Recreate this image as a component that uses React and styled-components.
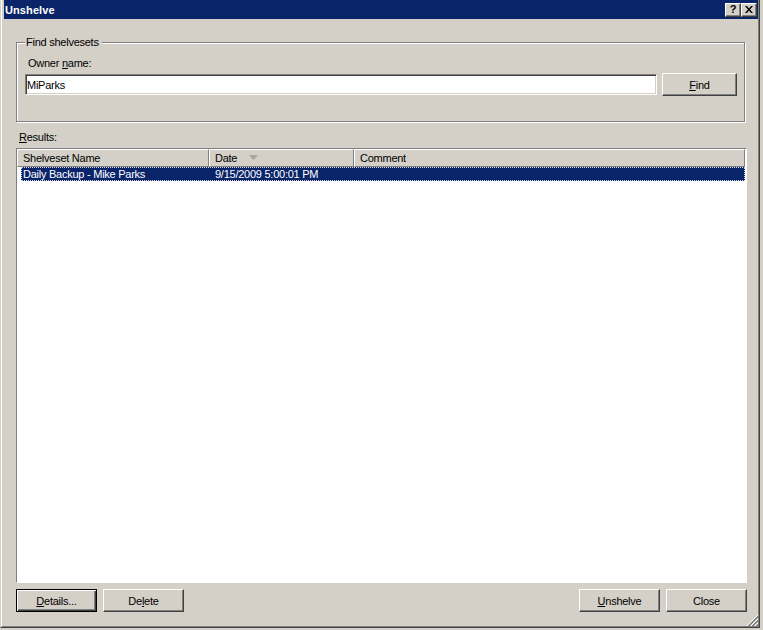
import React from "react";
import styled, { createGlobalStyle } from "styled-components";

const FACE = "#D4D0C8";
const SHADOW = "#808080";
const DARK = "#404040";
const HI = "#FFFFFF";
const NAVY = "#0A246A";

const Global = createGlobalStyle`
  html, body { margin: 0; padding: 0; background: ${FACE}; }
  body {
    font-family: "Liberation Sans", Arial, sans-serif;
    font-size: 11px;
    letter-spacing: -0.25px;
    color: #000;
  }
  * { box-sizing: border-box; }
  #root { width: 763px; height: 630px; overflow: hidden; }
`;

const Window = styled.div`
  width: 760px;
  height: 628px;
  border-left: 1px solid ${FACE};
  border-right: 1px solid ${DARK};
  border-bottom: 1px solid ${DARK};
`;

const Frame = styled.div`
  position: relative;
  height: 100%;
  display: flex;
  flex-direction: column;
  border-left: 1px solid ${HI};
  border-right: 1px solid ${SHADOW};
  border-bottom: 1px solid ${SHADOW};
  padding-left: 2px;
`;

const TitleBar = styled.div`
  height: 19px;
  flex: none;
  background: ${NAVY};
  display: flex;
  align-items: center;
  justify-content: space-between;
  padding: 0 1px 0 1px;
`;

const Title = styled.span`
  color: #fff;
  font-weight: bold;
  font-size: 11px;
  letter-spacing: 0.1px;
  line-height: 13px;
  padding-top: 1px;
`;

const CaptionGroup = styled.div`
  display: flex;
`;

const CaptionButton = styled.div`
  width: 16px;
  height: 14px;
  background: ${FACE};
  border: 1px solid;
  border-color: ${HI} ${DARK} ${DARK} ${HI};
  box-shadow: inset -1px -1px 0 ${SHADOW};
  display: flex;
  align-items: center;
  justify-content: center;
  font-weight: bold;
  font-size: 11px;
  line-height: 11px;
  padding-bottom: 1px;
  letter-spacing: 0;
`;

const Body = styled.div`
  flex: 1;
  display: flex;
  flex-direction: column;
  padding: 0 11px 14px 12px;
`;

const GroupBox = styled.div`
  position: relative;
  flex: none;
  height: 80px;
  margin: 23px 2px 0 0;
  border: 1px solid ${SHADOW};
  box-shadow: inset 1px 1px 0 ${HI}, 1px 1px 0 ${HI};
  padding: 14px 7px 0 8px;
`;

const Legend = styled.span`
  position: absolute;
  top: -7px;
  left: 8px;
  padding: 0 3px 0 1px;
  background: ${FACE};
  line-height: 13px;
`;

const FieldLabel = styled.div`
  line-height: 13px;
  margin: 0 0 3px 3px;
`;

const InputRow = styled.div`
  display: flex;
  align-items: center;
  gap: 5px;
`;

const TextInput = styled.input`
  flex: 1;
  height: 21px;
  margin: 0;
  padding: 0 1px;
  background: #fff;
  border: 1px solid;
  border-color: ${SHADOW} ${HI} ${HI} ${SHADOW};
  box-shadow: inset 1px 1px 0 ${DARK}, inset -1px -1px 0 ${FACE};
  font-family: "Liberation Sans", Arial, sans-serif;
  font-size: 11px;
  letter-spacing: -0.25px;
  color: #000;
  outline: none;
`;

const Button = styled.button`
  width: ${(p) => p.$w || 81}px;
  height: 23px;
  margin: 0;
  padding: 1px 0 0 0;
  flex: none;
  background: ${FACE};
  font-family: "Liberation Sans", Arial, sans-serif;
  font-size: 11px;
  letter-spacing: -0.25px;
  color: #000;
  border: 1px solid;
  border-color: ${(p) => (p.$default ? "#000" : `${HI} ${DARK} ${DARK} ${HI}`)};
  box-shadow: ${(p) =>
    p.$default
      ? `inset 1px 1px 0 ${HI}, inset -1px -1px 0 ${DARK}, inset -2px -2px 0 ${SHADOW}`
      : `inset -1px -1px 0 ${SHADOW}`};
  display: flex;
  align-items: center;
  justify-content: center;
  line-height: 13px;
`;

const Mn = styled.span`
  text-decoration: underline;
  text-underline-offset: 1px;
`;

const SectionLabel = styled.div`
  line-height: 13px;
  margin: 9px 0 4px 3px;
`;

const ListView = styled.div`
  flex: 1;
  display: flex;
  flex-direction: column;
  background: #fff;
  border: 1px solid;
  border-color: ${SHADOW} ${HI} ${HI} ${SHADOW};
  overflow: hidden;
`;

const Header = styled.div`
  display: flex;
  height: 18px;
  flex: none;
  margin-right: 1px;
`;

const HeaderCell = styled.div`
  width: ${(p) => (p.$w ? `${p.$w}px` : "auto")};
  flex: ${(p) => (p.$w ? "none" : "1")};
  background: ${FACE};
  border: 1px solid;
  border-color: ${HI} ${SHADOW} ${SHADOW} ${HI};
  padding: 1px 0 0 5px;
  display: flex;
  align-items: center;
  line-height: 13px;
  white-space: nowrap;
`;

const SortArrow = styled.svg`
  margin-left: 12px;
  margin-top: -3px;
`;

const Row = styled.div`
  display: flex;
  height: 14px;
  flex: none;
  margin: 0 1px 0 4px;
  background: ${(p) => (p.$selected ? NAVY : "transparent")};
  color: ${(p) => (p.$selected ? "#fff" : "#000")};
  border: 1px dotted ${(p) => (p.$selected ? "#d8d8d8" : "transparent")};
`;

const RowCell = styled.div`
  width: ${(p) => p.$w}px;
  flex: none;
  padding-left: ${(p) => p.$pad}px;
  line-height: 12px;
  white-space: nowrap;
`;

const Footer = styled.div`
  display: flex;
  justify-content: space-between;
  margin-top: 6px;
  flex: none;
`;

const ButtonGroup = styled.div`
  display: flex;
  gap: 6px;
`;

const Grip = styled.svg`
  position: absolute;
  right: 0;
  bottom: 0;
`;

function CloseGlyph() {
  return (
    <svg width="8" height="7" viewBox="0 0 8 7">
      <path d="M0 0h2l2 2.4L6 0h2L5 3.5 8 7H6L4 4.6 2 7H0l3-3.5z" fill="#000" />
    </svg>
  );
}

function SizeGrip() {
  const stripes = [1, 5, 9];
  return (
    <Grip width="12" height="12" viewBox="0 0 12 12">
      {stripes.map((k) => (
        <g key={k}>
          <line x1={k - 0.5} y1="12.5" x2="12.5" y2={k - 0.5} stroke={HI} strokeWidth="1" />
          <line x1={k + 0.5} y1="12.5" x2="12.5" y2={k + 0.5} stroke={SHADOW} strokeWidth="1" />
          <line x1={k + 1.5} y1="12.5" x2="12.5" y2={k + 1.5} stroke={SHADOW} strokeWidth="1" />
        </g>
      ))}
    </Grip>
  );
}

export default function App() {
  return (
    <>
      <Global />
      <Window>
        <Frame>
          <TitleBar>
            <Title>Unshelve</Title>
            <CaptionGroup>
              <CaptionButton>?</CaptionButton>
              <CaptionButton>
                <CloseGlyph />
              </CaptionButton>
            </CaptionGroup>
          </TitleBar>
          <Body>
            <GroupBox>
              <Legend>Find shelvesets</Legend>
              <FieldLabel>
                Owner <Mn>n</Mn>ame:
              </FieldLabel>
              <InputRow>
                <TextInput defaultValue="MiParks" readOnly />
                <Button $w={75}>
                  <Mn>F</Mn>ind
                </Button>
              </InputRow>
            </GroupBox>
            <SectionLabel>
              <Mn>R</Mn>esults:
            </SectionLabel>
            <ListView>
              <Header>
                <HeaderCell $w={192}>Shelveset Name</HeaderCell>
                <HeaderCell $w={145}>
                  Date
                  <SortArrow width="9" height="5" viewBox="0 0 9 5">
                    <polygon points="0,0 9,0 4.5,5" fill="#A8A79C" />
                  </SortArrow>
                </HeaderCell>
                <HeaderCell>Comment</HeaderCell>
              </Header>
              <Row $selected>
                <RowCell $w={187} $pad={1}>Daily Backup - Mike Parks</RowCell>
                <RowCell $w={145} $pad={6}>9/15/2009 5:00:01 PM</RowCell>
                <RowCell $w={300} $pad={6}></RowCell>
              </Row>
            </ListView>
            <Footer>
              <ButtonGroup>
                <Button $default>
                  <Mn>D</Mn>etails...
                </Button>
                <Button>
                  De<Mn>l</Mn>ete
                </Button>
              </ButtonGroup>
              <ButtonGroup>
                <Button>
                  <Mn>U</Mn>nshelve
                </Button>
                <Button>Close</Button>
              </ButtonGroup>
            </Footer>
          </Body>
          <SizeGrip />
        </Frame>
      </Window>
    </>
  );
}
